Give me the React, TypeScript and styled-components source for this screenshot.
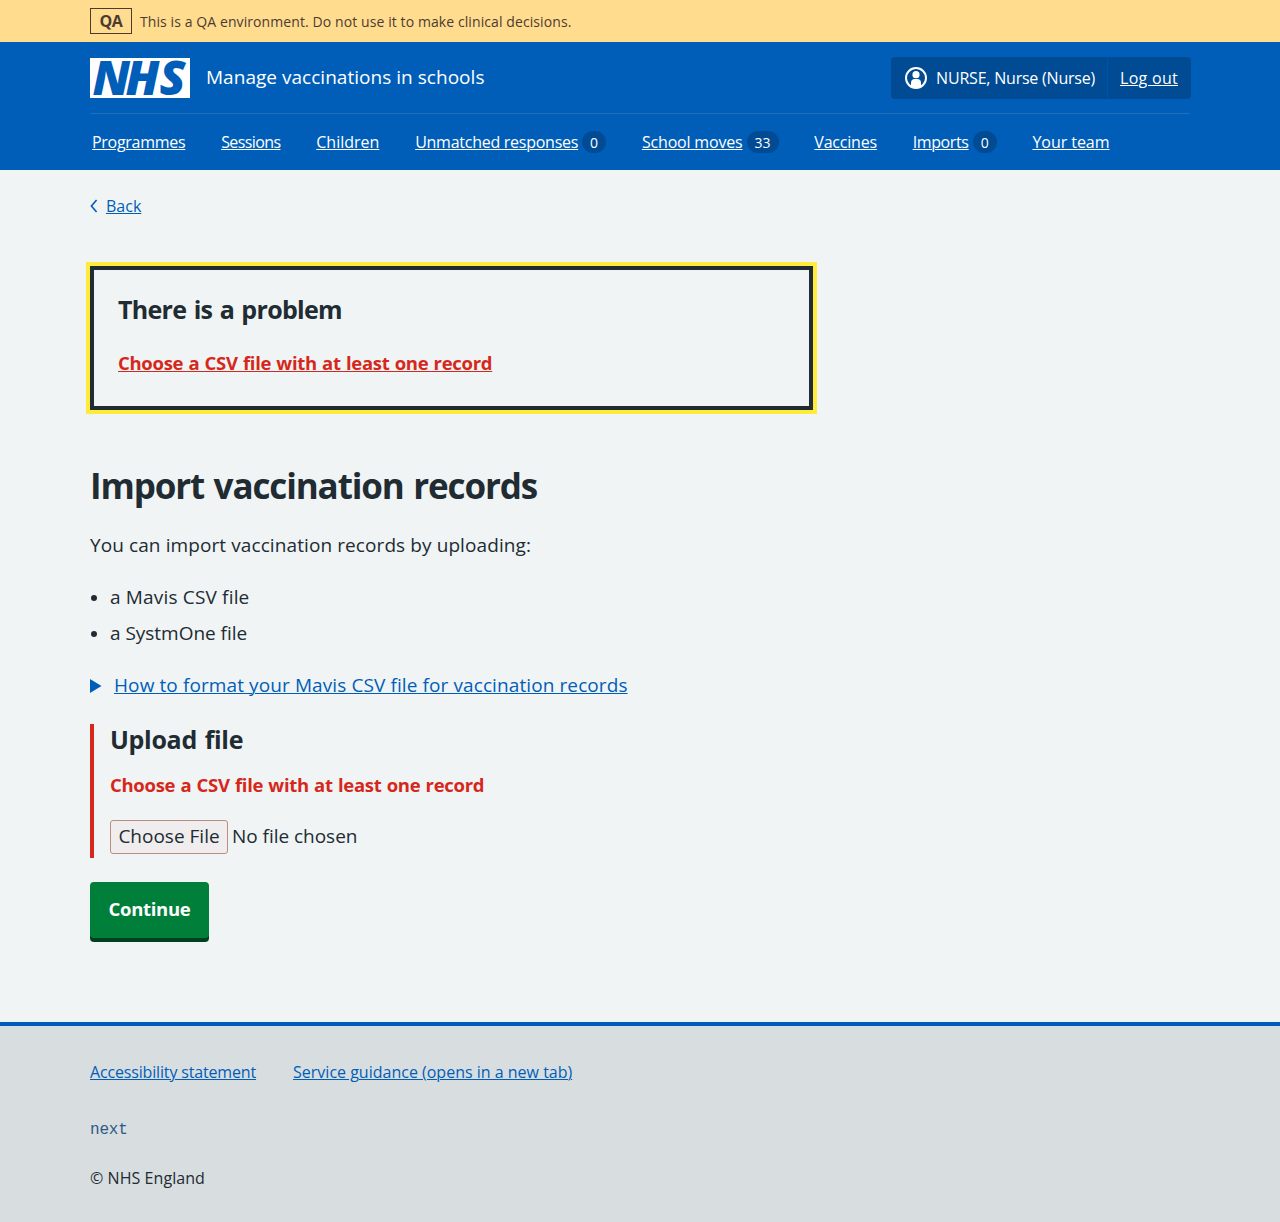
import React from "react";
import styled, { createGlobalStyle } from "styled-components";

const color = {
  page: "#f0f4f5",
  text: "#212b32",
  blue: "#005eb8",
  darkBlue: "#004b93",
  red: "#d5281b",
  green: "#007f3b",
  yellow: "#ffeb3b",
  footer: "#d8dde0",
};

const GlobalStyle = createGlobalStyle`
  *, *::before, *::after { box-sizing: border-box; }
  body {
    margin: 0;
    background: ${color.footer};
    color: ${color.text};
    font-family: "Open Sans", "Noto Sans", sans-serif;
    font-size: 19px;
    line-height: 28px;
  }
  h1, h2, p, ul { margin: 0; font-weight: inherit; }
`;

const Page = styled.div`
  display: flex;
  flex-direction: column;
  height: 1222px;
  background: ${color.page};
`;

const Container = styled.div`
  width: 1100px;
  margin: 0 auto;
`;

const Tracked = styled.span<{ $track?: number }>`
  letter-spacing: ${(p) => p.$track ?? 0}px;
  white-space: nowrap;
`;

const Link = styled.a<{ $track?: number }>`
  color: ${color.blue};
  letter-spacing: ${(p) => p.$track ?? 0}px;
  text-decoration: underline;
  text-decoration-thickness: 1px;
  text-underline-offset: 1px;
  white-space: nowrap;
`;

/* Environment banner */
const Banner = styled.div`
  height: 42px;
  background: #ffdc8e;
  color: #4d3b33;
  font-size: 14px;
`;

const BannerContent = styled(Container)`
  display: flex;
  align-items: flex-start;
  gap: 8px;
  padding-top: 8px;
`;

const EnvironmentTag = styled.strong`
  width: 42px;
  height: 26px;
  border: 1px solid currentColor;
  font-size: 16px;
  font-weight: 700;
  letter-spacing: -0.3px;
  line-height: 24px;
  text-align: center;
`;

/* Header */
const Header = styled.header`
  height: 128px;
  background: ${color.blue};
  color: #fff;
  font-size: 16px;
  line-height: 24px;
`;

const HeaderTop = styled(Container)`
  display: flex;
  align-items: center;
  height: 72px;
  border-bottom: 1px solid #266eb9;
`;

const Logo = styled.svg`
  display: block;
  width: 100px;
  height: 40px;
  margin-right: 16px;
  overflow: visible;
  background: #fff;
`;

const ServiceName = styled(Tracked)`
  padding-bottom: 2px;
  font-size: 19px;
  line-height: 28px;
`;

const Account = styled.div`
  display: flex;
  height: 42px;
  margin: 0 -1px 0 auto;
  border-radius: 4px;
  background: ${color.darkBlue};
`;

const AccountItem = styled.div`
  display: flex;
  align-items: center;
  gap: 8px;
  padding: 0 12px 0 13px;

  & + & {
    padding: 0 13px 0 12px;
    margin: 1px 0;
    border-left: 1px solid #0054a5;
  }
`;

const HeaderLink = styled(Link)`
  color: #fff;
`;

const Nav = styled(Container)`
  display: flex;
  gap: 35.8px;
  padding: 16px 2px 0;
`;

const NavItem = styled.div`
  display: flex;
  align-items: center;
  gap: 4px;
`;

const Count = styled.span`
  min-width: 24px;
  height: 22px;
  padding: 0 8px;
  border-radius: 11px;
  background: ${color.darkBlue};
  font-size: 14px;
  font-weight: 500;
  line-height: 23px;
  text-align: center;
`;

/* Main content */
const Main = styled.main`
  flex: 1;
  padding-top: 24px;
`;

const BackRow = styled.div`
  display: flex;
  align-items: center;
  gap: 8px;
  height: 24px;
  font-size: 16px;
  line-height: 24px;
`;

const ErrorSummary = styled.section`
  width: 723px;
  height: 144px;
  margin-top: 48px;
  padding: 23px 24px;
  border: 4px solid ${color.text};
  box-shadow: 0 0 0 4px ${color.yellow};
`;

const SummaryTitle = styled.h2`
  margin-bottom: 24px;
  font-size: 25px;
  line-height: 32px;
  word-spacing: 1.5px;
`;

const Strong = styled(Tracked)`
  font-weight: 700;
`;

const ErrorLink = styled(Link)`
  color: ${color.red};
  font-size: 18.5px;
  font-weight: 700;
  word-spacing: 0.75px;
`;

const PageTitle = styled.h1`
  margin: 54px 0 23px;
  font-size: 35px;
  line-height: 44px;
  word-spacing: 1.5px;
`;

const List = styled.ul`
  display: grid;
  gap: 8px;
  margin: 24px 0;
  padding-left: 20px;

  li::marker {
    font-size: 16.5px;
  }
`;

const Details = styled.div`
  display: flex;
  align-items: center;
  gap: 12px;
`;

const Triangle = styled.svg`
  width: 12px;
  height: 14px;
  margin-top: 2px;
`;

const FormGroup = styled.div`
  height: 134px;
  margin: 25px 0 24px;
  padding-left: 16px;
  border-left: 4px solid ${color.red};
`;

const GroupTitle = styled.h2`
  margin-bottom: 17px;
  font-size: 25px;
  line-height: 30px;
  word-spacing: 1.5px;
`;

const ErrorMessage = styled.p`
  margin-bottom: 21px;
  color: ${color.red};
  font-size: 18.5px;
  word-spacing: 0.75px;
`;

const FileInput = styled.div`
  display: flex;
  gap: 4px;
  line-height: 30px;
`;

const FileButton = styled.button`
  width: 118px;
  height: 34px;
  padding: 0 0 2px;
  border: 1px solid #b98d80;
  border-radius: 3px;
  background: #efeded;
  color: inherit;
  font: inherit;
`;

const FileStatus = styled(Tracked)`
  padding-top: 1px;
`;

const Submit = styled.button`
  display: block;
  width: 119px;
  height: 56px;
  padding: 13px 0 15px;
  border: 0;
  border-radius: 4px;
  background: ${color.green};
  box-shadow: 0 4px 0 #00401e;
  color: #fff;
  font: inherit;
  font-size: 18.5px;
`;

/* Footer */
const Footer = styled.footer`
  height: 200px;
  padding-top: 34px;
  border-top: 4px solid ${color.blue};
  background: ${color.footer};
  font-size: 16px;
  line-height: 24px;
`;

const FooterLinks = styled.div`
  display: flex;
  gap: 37px;
`;

const Version = styled.p`
  margin: 34px 0 24px;
  color: #2f5a87;
  font-family: "Liberation Mono", monospace;
  letter-spacing: -0.2px;
`;

const NhsLogo = () => (
  <Logo viewBox="0 0 100 40" role="img" aria-label="NHS">
    <text
      x="2.6 35.4 69.5"
      y="36.8"
      fill={color.blue}
      fontFamily="Open Sans"
      fontSize="47.5"
      fontWeight="800"
      fontStyle="italic"
    >
      NHS
    </text>
  </Logo>
);

const UserIcon = () => (
  <svg width="24" height="24" viewBox="0 0 24 24" aria-hidden="true">
    <circle cx="12" cy="12" r="10" fill="none" stroke="#fff" strokeWidth="2" />
    <circle cx="12" cy="8.7" r="3.6" fill="#fff" />
    <path d="M7 21v-4.2a3.8 3.8 0 0 1 3.8-3.8h2.4a3.8 3.8 0 0 1 3.8 3.8V21z" fill="#fff" />
  </svg>
);

const navigation: { label: string; track: number; count?: number }[] = [
  { label: "Programmes", track: -0.28 },
  { label: "Sessions", track: -0.6 },
  { label: "Children", track: 0 },
  { label: "Unmatched responses", track: -0.26, count: 0 },
  { label: "School moves", track: -0.18, count: 33 },
  { label: "Vaccines", track: -0.21 },
  { label: "Imports", track: -0.37, count: 0 },
  { label: "Your team", track: -0.05 },
];

export default function App() {
  return (
    <Page>
      <GlobalStyle />
      <Banner>
        <BannerContent>
          <EnvironmentTag>QA</EnvironmentTag>
          <Tracked $track={0.09}>
            This is a QA environment. Do not use it to make clinical decisions.
          </Tracked>
        </BannerContent>
      </Banner>

      <Header>
        <HeaderTop>
          <NhsLogo />
          <ServiceName $track={0.03}>Manage vaccinations in schools</ServiceName>
          <Account>
            <AccountItem>
              <UserIcon />
              <Tracked $track={-0.21}>NURSE, Nurse (Nurse)</Tracked>
            </AccountItem>
            <AccountItem>
              <HeaderLink $track={0.28}>Log out</HeaderLink>
            </AccountItem>
          </Account>
        </HeaderTop>
        <Nav as="nav">
          {navigation.map((item) => (
            <NavItem key={item.label}>
              <HeaderLink $track={item.track}>{item.label}</HeaderLink>
              {item.count !== undefined && <Count>{item.count}</Count>}
            </NavItem>
          ))}
        </Nav>
      </Header>

      <Main>
        <Container>
          <BackRow>
            <svg width="8" height="14" viewBox="0 0 8 14" aria-hidden="true">
              <path d="M6.6 1 1.4 7l5.2 6" fill="none" stroke={color.blue} strokeWidth="1.6" />
            </svg>
            <Link>Back</Link>
          </BackRow>

          <ErrorSummary>
            <SummaryTitle>
              <Strong $track={-0.69}>There is a problem</Strong>
            </SummaryTitle>
            <ErrorLink $track={-0.3}>Choose a CSV file with at least one record</ErrorLink>
          </ErrorSummary>

          <PageTitle>
            <Strong $track={-1.12}>Import vaccination records</Strong>
          </PageTitle>
          <p>
            <Tracked $track={0.094}>You can import vaccination records by uploading:</Tracked>
          </p>
          <List>
            <li>
              <Tracked $track={0.17}>a Mavis CSV file</Tracked>
            </li>
            <li>
              <Tracked $track={-0.03}>a SystmOne file</Tracked>
            </li>
          </List>

          <Details>
            <Triangle viewBox="0 0 12 14" aria-hidden="true">
              <path d="M0 0l11.5 7L0 14z" fill={color.blue} />
            </Triangle>
            <Link $track={0.1}>How to format your Mavis CSV file for vaccination records</Link>
          </Details>

          <FormGroup>
            <GroupTitle>
              <Strong $track={-0.3}>Upload file</Strong>
            </GroupTitle>
            <ErrorMessage>
              <Strong $track={-0.3}>Choose a CSV file with at least one record</Strong>
            </ErrorMessage>
            <FileInput>
              <FileButton type="button">Choose File</FileButton>
              <FileStatus $track={-0.03}>No file chosen</FileStatus>
            </FileInput>
          </FormGroup>

          <Submit type="button">
            <Strong $track={-0.29}>Continue</Strong>
          </Submit>
        </Container>
      </Main>

      <Footer>
        <Container>
          <FooterLinks>
            <Link $track={-0.16}>Accessibility statement</Link>
            <Link>Service guidance (opens in a new tab)</Link>
          </FooterLinks>
          <Version>next</Version>
          <p>
            <Tracked $track={0.06}>© NHS England</Tracked>
          </p>
        </Container>
      </Footer>
    </Page>
  );
}
